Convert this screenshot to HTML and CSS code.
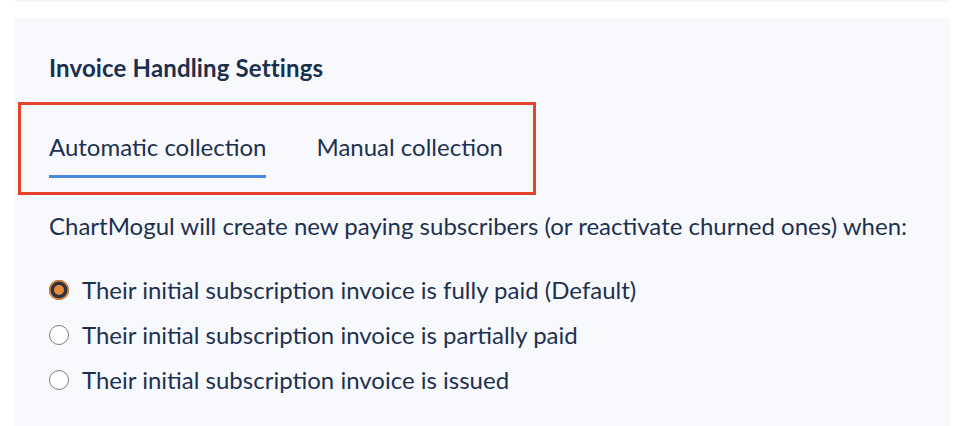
FILE: index.html
```html
<!DOCTYPE html>
<html lang="en">
<head>
<meta charset="utf-8">
<title>Invoice Handling Settings</title>
<link rel="stylesheet" href="styles.css">
</head>
<body>
<div class="top-strip"></div>
<section class="panel">
  <h2 class="title">Invoice Handling Settings</h2>
  <div class="tabs-highlight">
    <div class="tab tab-active">Automatic collection</div>
    <div class="tab">Manual collection</div>
  </div>
  <p class="desc">ChartMogul will create new paying subscribers (or reactivate churned ones) when:</p>
  <ul class="options">
    <li class="option"><span class="radio radio-checked"></span><span>Their initial subscription invoice is fully paid (Default)</span></li>
    <li class="option"><span class="radio"></span><span>Their initial subscription invoice is partially paid</span></li>
    <li class="option"><span class="radio"></span><span>Their initial subscription invoice is issued</span></li>
  </ul>
</section>
</body>
</html>
```
FILE: styles.css
```css
html, body {
  margin: 0;
  padding: 0;
  background: #ffffff;
}
body {
  font-family: "Lato", "Open Sans", sans-serif;
  font-size: 24px;
  color: #1d3150;
  height: 426px;
  overflow: hidden;
}
.top-strip {
  height: 2px;
  margin-left: 15px;
  width: 935px;
  background: #f5f6f9;
}
.panel {
  margin-top: 16px;
  margin-left: 15px;
  width: 935px;
  box-sizing: border-box;
  padding: 35px 0 0 34px;
  background: #f8f9fd;
  height: 420px;
}
.title {
  margin: 0;
  font-size: 24px;
  line-height: 30px;
  font-weight: 700;
  color: #1c2f4d;
  letter-spacing: 0.15px;
}
.tabs-highlight {
  display: flex;
  width: fit-content;
  gap: 50px;
  margin: 19px 0 0 -31px;
  padding: 27px 30px 14px 28px;
  border: 3px solid #e5432a;
}
.tab {
  line-height: 30px;
  padding-bottom: 13px;
  border-bottom: 3px solid transparent;
}
.tab-active {
  border-bottom-color: #4a88e0;
}
.desc {
  margin: 16px 0 0 0;
  line-height: 30px;
}
.options {
  list-style: none;
  margin: 26px 0 0 0;
  padding: 0;
}
.option {
  display: flex;
  align-items: center;
  height: 45px;
  line-height: 45px;
  gap: 13px;
}
.radio {
  flex: none;
  width: 20px;
  height: 20px;
  box-sizing: border-box;
  border-radius: 50%;
  background: #ffffff;
  border: 1.5px solid #7a7c80;
}
.radio-checked {
  border: none;
  background: #e8893a;
  box-shadow: inset 0 0 0 1.5px #e8893a, inset 0 0 0 5px #2d3340;
}
```
